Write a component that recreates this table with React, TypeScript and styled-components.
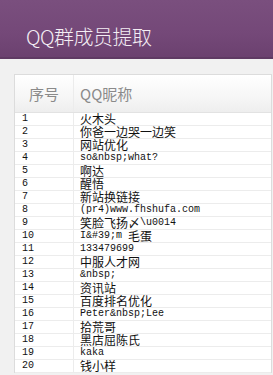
import React from "react";
import styled, { createGlobalStyle } from "styled-components";

const GlobalStyle = createGlobalStyle`
  html, body {
    margin: 0;
    padding: 0;
    background: #f1f1f1;
    font-family: "Noto Sans CJK SC", "Noto Sans", sans-serif;
  }
`;

const SPage = styled.div`
  width: 273px;
  height: 375px;
  overflow: hidden;
`;

const STopBar = styled.div`
  height: 59px;
  background: linear-gradient(to bottom, #7a4f7e 0%, #744878 60%, #6b416f 100%);
  border-bottom: 2px solid #5f3a63;
  display: flex;
  align-items: center;
  padding-left: 26px;
  padding-top: 15px;
  box-sizing: border-box;
`;

const STitle = styled.h1`
  margin: 0;
  font-size: 20px;
  font-weight: 300;
  color: #f4eef4;
  letter-spacing: -0.5px;
`;

const SContent = styled.div`
  padding: 15px 1px 0 14px;
`;

const SCard = styled.div`
  background: #fff;
  border: 1px solid #dcdcdc;
  border-bottom: none;
`;

const SHeadRow = styled.div`
  display: grid;
  grid-template-columns: 59px 1fr;
  height: 37px;
  background: linear-gradient(to bottom, #ffffff 0%, #f6f6f6 60%, #eeeeee 100%);
  border-bottom: 1px solid #e2e2e2;
`;

const SHeadCell = styled.div<{ $align: "center" | "left" }>`
  display: flex;
  align-items: center;
  justify-content: ${(p) => (p.$align === "left" ? "flex-start" : "center")};
  padding-left: ${(p) => (p.$align === "left" ? "6px" : "0")};
  font-size: 15px;
  color: #8a8a8a;
  border-right: ${(p) => (p.$align === "center" ? "1px solid #ececec" : "none")};
`;

const SRow = styled.div`
  display: grid;
  grid-template-columns: 59px 1fr;
  height: 12px;
  border-bottom: 1px solid #ececec;
`;

const SCell = styled.div<{ $num?: boolean }>`
  display: flex;
  align-items: center;
  height: 12px;
  padding-left: ${(p) => (p.$num ? "7px" : "6px")};
  font-size: 12px;
  line-height: 12px;
  color: #111;
  border-right: ${(p) => (p.$num ? "1px solid #ececec" : "none")};
  white-space: nowrap;
  overflow: hidden;
`;

const SLatin = styled.span`
  font-family: "Liberation Mono", monospace;
  font-size: 10px;
  line-height: 12px;
`;

const SHan = styled.span`
  line-height: 12px;
`;

const names = [
  "火木头",
  "你爸一边哭一边笑",
  "网站优化",
  "so&nbsp;what?",
  "啊达",
  "醒悟",
  "新站换链接",
  "(pr4)www.fhshufa.com",
  "笑脸飞扬〆\\u0014",
  "I&#39;m 毛蛋",
  "133479699",
  "中服人才网",
  "&nbsp;",
  "资讯站",
  "百度排名优化",
  "Peter&nbsp;Lee",
  "拾荒哥",
  "黑店屈陈氏",
  "kaka",
  "钱小样",
];

function renderName(name: string) {
  return name
    .split(/([\x00-\x7f]+)/)
    .filter(Boolean)
    .map((part, i) =>
      /^[\x00-\x7f]+$/.test(part) ? (
        <SLatin key={i}>{part.replace(/ /g, "\u00a0")}</SLatin>
      ) : (
        <SHan key={i}>{part}</SHan>
      )
    );
}

export default function App() {
  return (
    <SPage>
      <GlobalStyle />
      <STopBar>
        <STitle>QQ群成员提取</STitle>
      </STopBar>
      <SContent>
        <SCard>
          <SHeadRow>
            <SHeadCell $align="center">序号</SHeadCell>
            <SHeadCell $align="left">QQ昵称</SHeadCell>
          </SHeadRow>
          {names.map((n, i) => (
            <SRow key={i}>
              <SCell $num>
                <SLatin>{i + 1}</SLatin>
              </SCell>
              <SCell>{renderName(n)}</SCell>
            </SRow>
          ))}
        </SCard>
      </SContent>
    </SPage>
  );
}
